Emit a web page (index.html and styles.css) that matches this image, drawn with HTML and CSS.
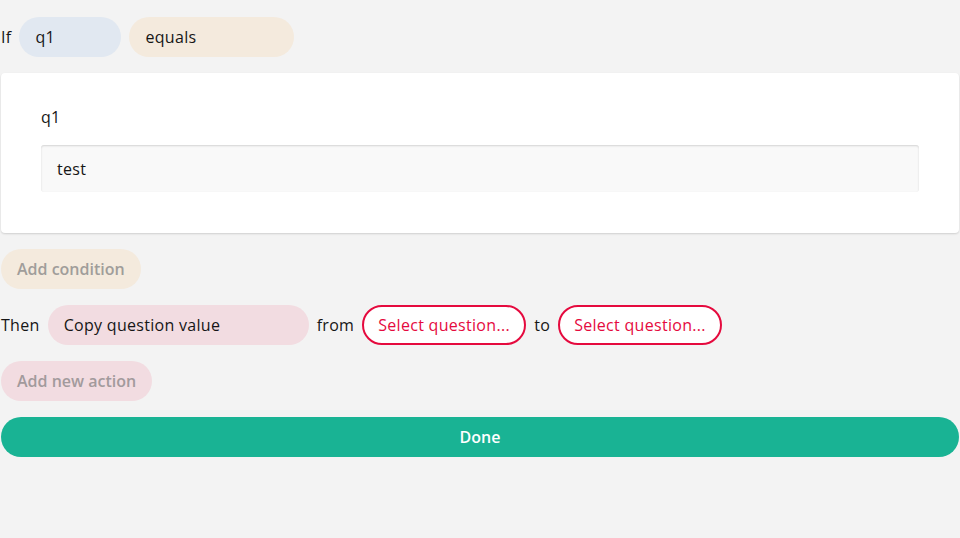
FILE: index.html
```html
<!DOCTYPE html>
<html lang="en">
<head>
<meta charset="utf-8">
<title>Logic editor</title>
<link rel="stylesheet" href="styles.css">
</head>
<body>
<div class="editor">
  <div class="row">
    <span class="word">If</span>
    <span class="pill pill-blue pill-q1">q1</span>
    <span class="pill pill-orange pill-equals">equals</span>
  </div>
  <div class="card">
    <div class="label">q1</div>
    <div class="input">test</div>
  </div>
  <div class="row">
    <span class="pill pill-orange pill-muted">Add condition</span>
  </div>
  <div class="row">
    <span class="word">Then</span>
    <span class="pill pill-pink pill-action">Copy question value</span>
    <span class="word">from</span>
    <span class="pill pill-select">Select question...</span>
    <span class="word">to</span>
    <span class="pill pill-select">Select question...</span>
  </div>
  <div class="row">
    <span class="pill pill-pink pill-muted">Add new action</span>
  </div>
  <button class="done">Done</button>
</div>
</body>
</html>
```

FILE: styles.css
```css
* { box-sizing: border-box; }
html, body {
  margin: 0;
  padding: 0;
  background: #f3f3f3;
  font-family: "Open Sans", "Liberation Sans", sans-serif;
  font-size: 16px;
  line-height: 24px;
  color: #161616;
  letter-spacing: 0.3px;
}
.editor {
  display: flex;
  flex-direction: column;
  gap: 16px;
  padding: 17px 1px 0 1px;
}
.row {
  display: flex;
  align-items: center;
  gap: 8px;
  height: 40px;
}
.word { white-space: nowrap; }
.pill {
  display: inline-block;
  height: 40px;
  padding: 8px 16px;
  border-radius: 20px;
  white-space: nowrap;
}
.pill-blue { background: #e1e8f1; }
.pill-orange { background: #f4eadd; }
.pill-pink { background: #f2dce1; }
.pill-q1 { width: 102px; }
.pill-equals { width: 165px; }
.pill-action { width: 261px; }
.pill-muted {
  font-weight: 600;
  letter-spacing: 0;
  color: #a09d9a;
}
.pill-pink.pill-muted { color: #a29a9c; }
.pill-select {
  background: #ffffff;
  border: 2px solid #e50a3e;
  color: #e50a3e;
  padding: 6px 14px;
  width: 164px;
}
.card {
  background: #ffffff;
  border-radius: 4px;
  box-shadow: 0 1px 2px rgba(0, 0, 0, 0.15);
  padding: 32px 40px 40px 40px;
  height: 160px;
}
.label {
  margin-bottom: 16px;
}
.input {
  background: #f9f9f9;
  box-shadow: inset 0 1px 2px rgba(0, 0, 0, 0.15);
  border-radius: 3px;
  padding: 12px 16px;
  height: 47px;
}
.done {
  height: 40px;
  border: none;
  border-radius: 20px;
  background: #19b394;
  color: #ffffff;
  font-family: "Open Sans", "Liberation Sans", sans-serif;
  font-size: 16px;
  font-weight: 600;
  line-height: 24px;
  letter-spacing: 0;
  width: 100%;
  padding: 8px 16px;
}
```
